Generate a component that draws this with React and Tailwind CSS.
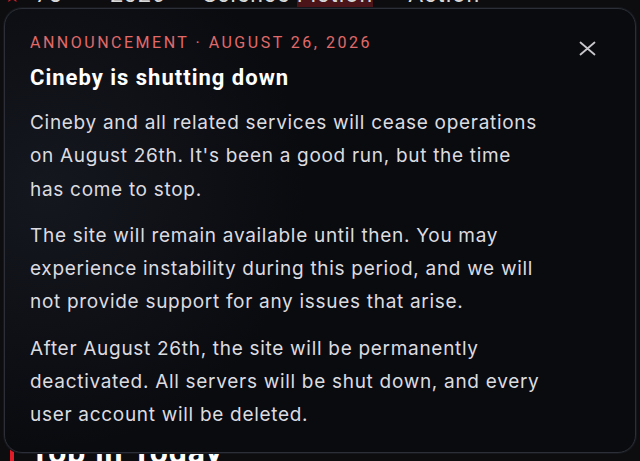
import React from "react";

export default function App() {
  return (
    <div className="relative w-[640px] h-[461px] overflow-hidden bg-[#0d0d10]" style={{ fontFamily: "Inter, sans-serif" }}>
      {/* page behind */}
      <div className="flex items-center pl-[4px] -mt-[18px] h-[26px] text-[23px] text-[#d8d8d8] tracking-[1px]" style={{ fontFamily: "Roboto, sans-serif" }}>
        <span className="text-[#e11d2a] text-[18px]">★</span>
        <span className="ml-[14px]">78</span>
        <span className="ml-[20px] text-[#777] text-[10px]">●</span>
        <span className="ml-[20px]">2026</span>
        <span className="ml-[18px] text-[#777] text-[10px]">●</span>
        <span className="ml-[8px] px-1">Science <span className="bg-[#4a1419]">Fiction</span></span>
        <span className="ml-[10px] text-[#777] text-[10px]">●</span>
        <span className="ml-[14px]">Action</span>
      </div>
      <div className="flex items-center gap-4 mt-[420px] pl-[10px]">
        <div className="w-[4px] h-[30px] bg-[#e11d2a]"></div>
        <div className="text-[32px] font-bold text-white tracking-[1px]" style={{ fontFamily: "Roboto, sans-serif" }}>Top in Today</div>
      </div>

      {/* modal */}
      <div className="absolute left-[4px] top-[8px] w-[632px] h-[445px] rounded-[18px] border border-[#2c2f37] bg-[#0a0b0f] shadow-[0_0_0_1px_#15171c]"
        style={{ backgroundImage: "radial-gradient(ellipse 260px 260px at 40px 180px, rgba(40,46,60,0.35), transparent)" }}>
        <div className="pt-[24px] pl-[25px] pr-[40px]">
          <div className="flex items-start justify-between">
            <div className="text-[16px] tracking-[2.5px] text-[#e06a6a] leading-[20px]" style={{ fontFamily: "Roboto, sans-serif" }}>
              ANNOUNCEMENT · AUGUST 26, 2026
            </div>
            <svg width="17" height="15" viewBox="0 0 17 15" className="mt-[8px] -mr-[1px]">
              <path d="M1.5 1.5 L15.5 13.5 M15.5 1.5 L1.5 13.5" stroke="#c8c8cc" strokeWidth="1.8" strokeLinecap="round" />
            </svg>
          </div>
          <div className="mt-[9px] text-[22px] font-bold text-white leading-[26px] tracking-[1px]" style={{ fontFamily: "Roboto, sans-serif" }}>
            Cineby is shutting down
          </div>
          <div className="mt-[15px] text-[19px] leading-[33.3px] tracking-[0.7px] text-[#dcdce0] flex flex-col gap-[13px]">
            <p>Cineby and all related services will cease operations<br />on August 26th. It's been a good run, but the time<br />has come to stop.</p>
            <p>The site will remain available until then. You may<br />experience instability during this period, and we will<br />not provide support for any issues that arise.</p>
            <p>After August 26th, the site will be permanently<br />deactivated. All servers will be shut down, and every<br />user account will be deleted.</p>
          </div>
        </div>
      </div>
    </div>
  );
}
